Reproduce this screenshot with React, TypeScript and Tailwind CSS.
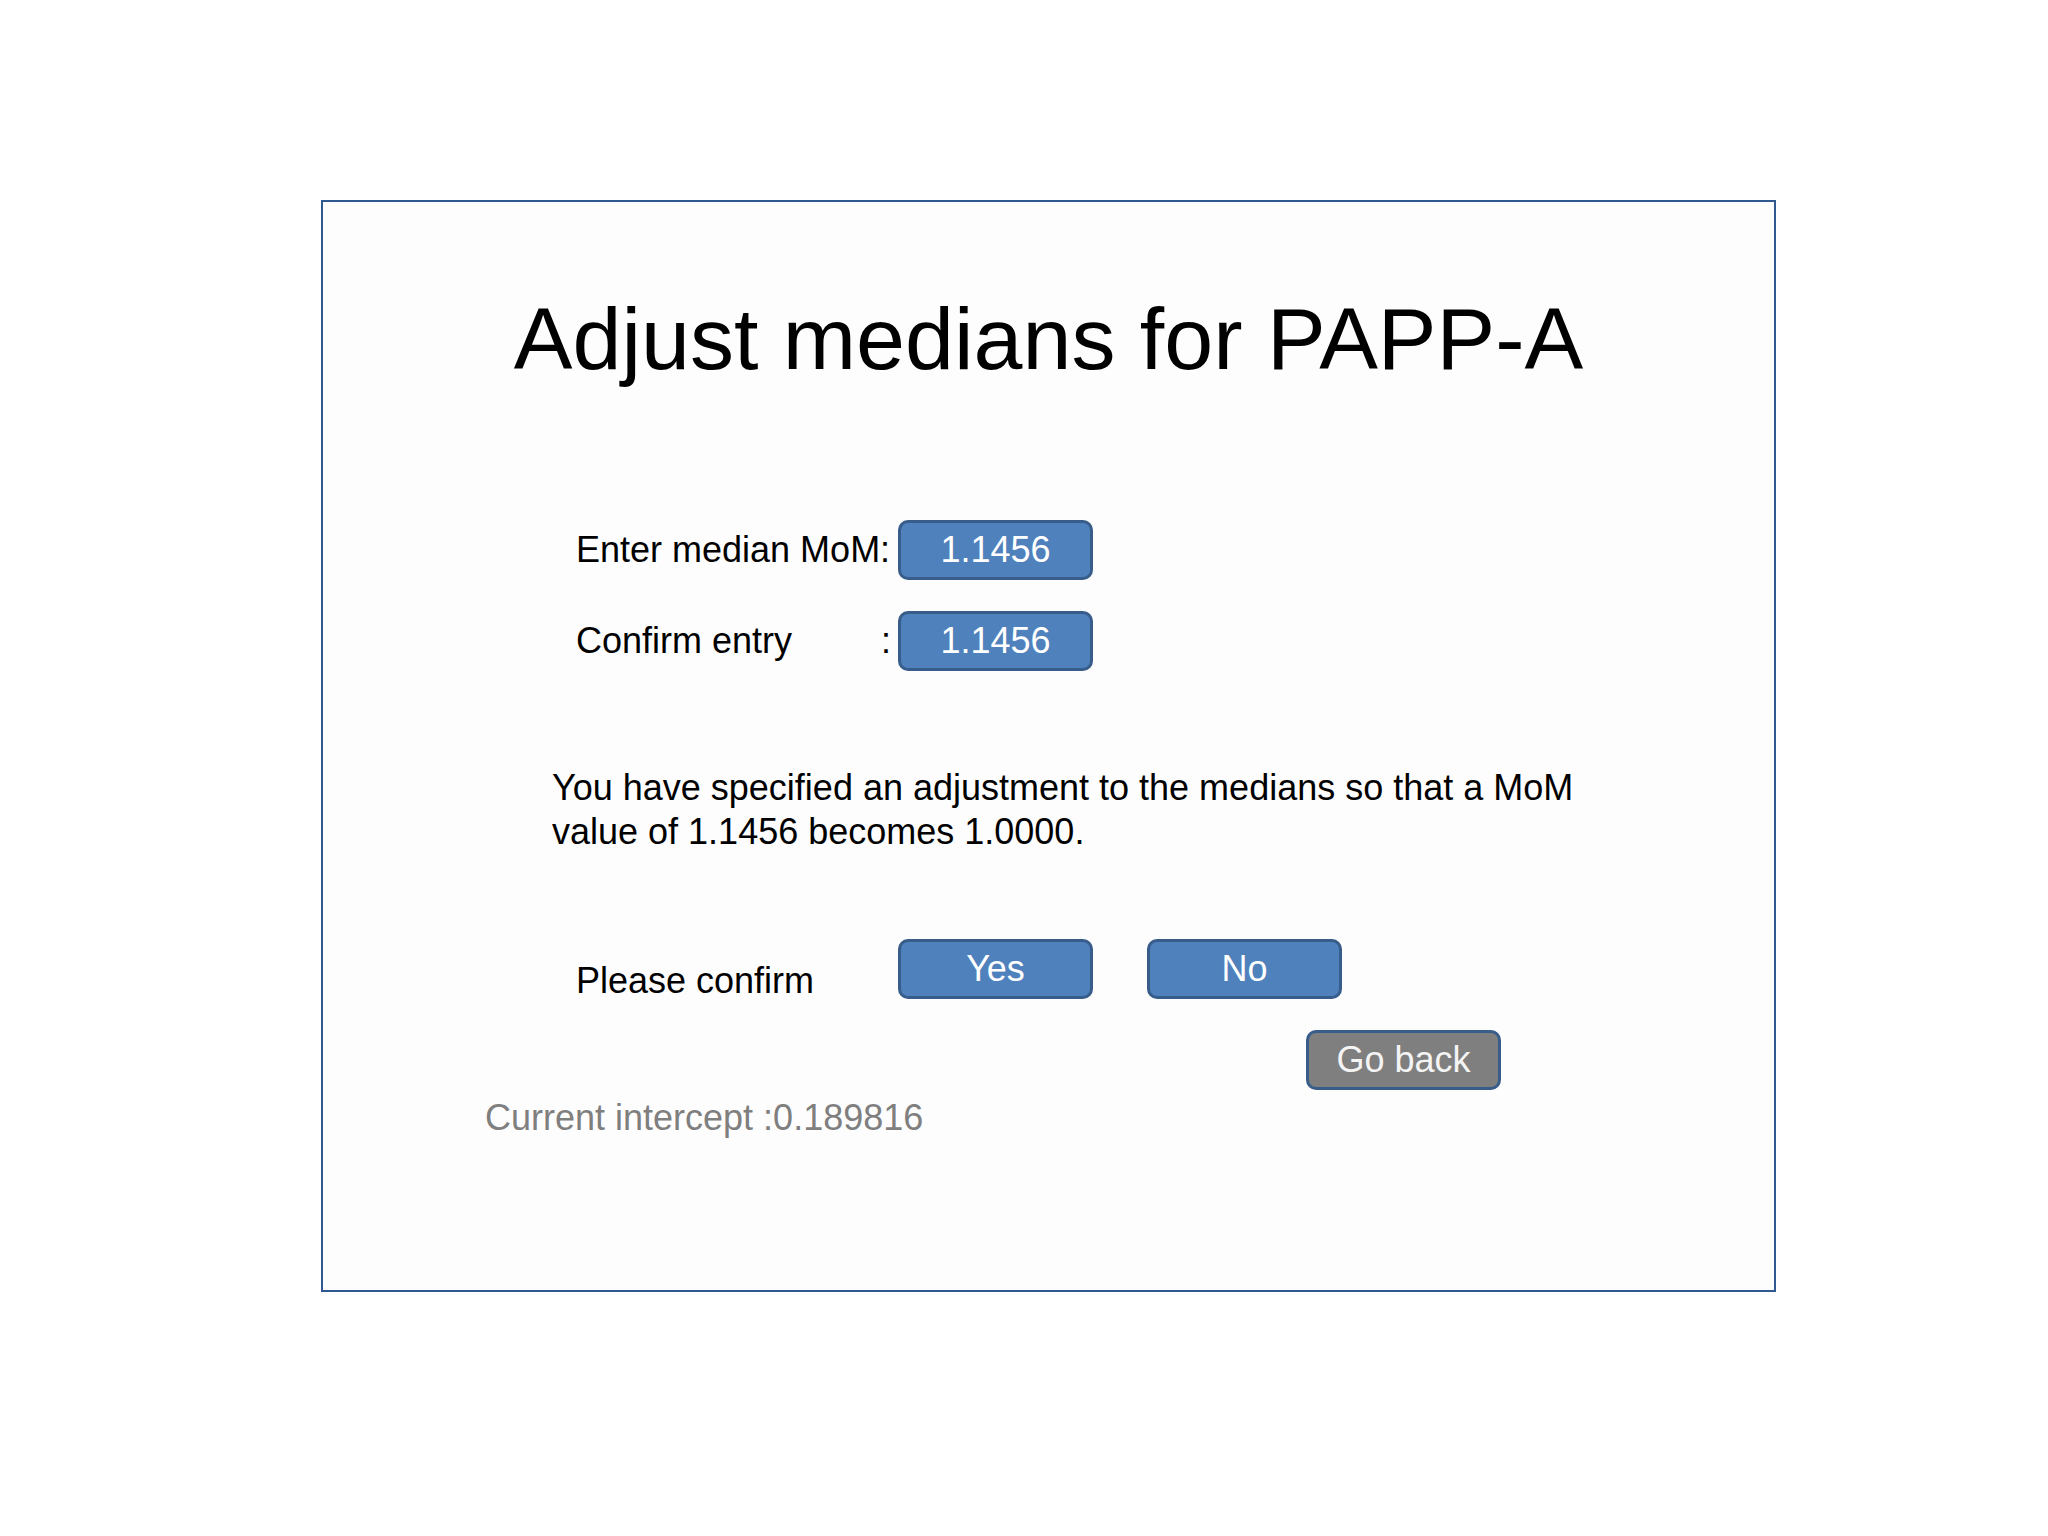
import React from "react";

const btn =
  "flex h-[60px] w-[195px] items-center justify-center rounded-[10px] border-[3px] border-[#385d8a] bg-[#4f81bd] text-[36px] leading-[54px] text-white";

export default function App() {
  return (
    <div className="min-h-screen w-full bg-white pt-[200px] font-['Liberation_Sans',Arial,sans-serif]">
      <div className="ml-[321px] flex h-[1092px] w-[1455px] flex-col border-2 border-[#2f5a90] bg-[#fdfdfd]">
        <h1 className="mt-[93px] whitespace-nowrap text-center text-[88px] leading-none text-black">
          Adjust medians for PAPP-A
        </h1>

        {/* entry rows */}
        <div className="ml-[253px] mt-[137px] flex flex-col gap-[31px]">
          <div className="flex items-center">
            <span className="w-[322px] whitespace-nowrap text-[36px] leading-[44px] text-black">
              Enter median MoM:
            </span>
            <div className={btn}>1.1456</div>
          </div>
          <div className="flex items-center">
            <span className="flex w-[322px] justify-between whitespace-nowrap text-[36px] leading-[44px] text-black">
              <span>Confirm entry</span>
              <span className="mr-[7px]">:</span>
            </span>
            <div className={btn}>1.1456</div>
          </div>
        </div>

        <p className="ml-[229px] mt-[95px] whitespace-nowrap text-[36px] leading-[44px] text-black">
          You have specified an adjustment to the medians so that a MoM
          <br />
          value of 1.1456 becomes 1.0000.
        </p>

        {/* confirmation */}
        <div className="ml-[253px] mt-[85px] flex items-start">
          <span className="w-[322px] whitespace-nowrap pt-[20px] text-[36px] leading-[44px] text-black">
            Please confirm
          </span>
          <div className="flex gap-[54px]">
            <button className={btn}>Yes</button>
            <button className={btn}>No</button>
          </div>
        </div>

        <div className="ml-[983px] mt-[27px]">
          <button className="flex h-[60px] w-[195px] items-center justify-center rounded-[10px] border-[3px] border-[#385d8a] bg-[#7f7f7f] text-[36px] leading-[54px] text-[#f4f4f4]">
            Go back
          </button>
        </div>

        <p className="ml-[162px] mt-[6px] whitespace-nowrap text-[36px] leading-[44px] text-[#7f7f7f]">
          Current intercept :0.189816
        </p>
      </div>
    </div>
  );
}
